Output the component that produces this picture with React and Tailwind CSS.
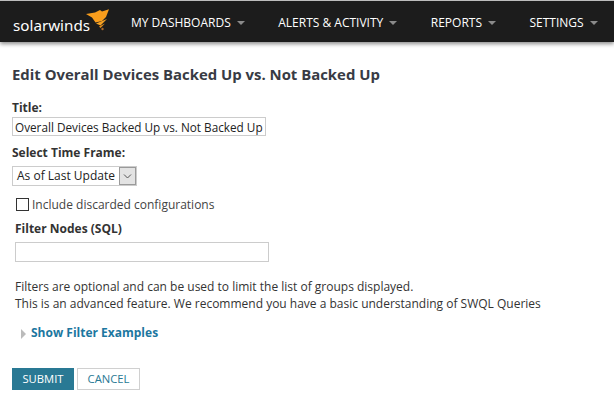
import React from 'react';

const font = "font-['Open_Sans',sans-serif]";

const Logo = () => (
  <div className="relative w-[108px] h-[32px]">
    <span className="absolute left-[13px] top-[9px] text-[15.2px] leading-[20px] text-white font-['Noto_Sans',sans-serif]">solarwinds</span>
    <svg className="absolute left-[85px] top-0" width="25" height="26" viewBox="0 0 25 26">
      <path d="M1 8 L10 6.5 L15 4 L17 5.5 L24 3.3 L21 11 L17 15 L10.5 16.5 L7 11.5 Z" fill="#f99d1c" />
      <path d="M11 17.5 L22 13 L15.5 19.5 Z" fill="#f5a122" />
      <path d="M14 20.5 L20 17.5 L15.5 22 Z" fill="#e88f1a" />
      <circle cx="17.5" cy="23" r="1.2" fill="#a9682a" />
    </svg>
  </div>
);

const NavItem = ({ label }) => (
  <div className="flex items-center gap-[6px] text-[12px] leading-[18px] text-white whitespace-nowrap">
    <span>{label}</span>
    <span className="w-0 h-0 border-x-[4px] border-x-transparent border-t-[4px] border-t-[#8a8a8a]" />
  </div>
);

export default function App() {
  return (
    <div className={`${font} w-[614px] h-[403px] overflow-hidden bg-white text-[#333]`}>
      <header className="h-[42px] border-t border-t-[#bdbdbd] bg-[#1c1c1c] flex items-center pt-[1px] shadow-[0_2px_4px_rgba(0,0,0,0.45)]">
        <Logo />
        <nav className="flex items-center ml-[23px] mt-[1px] gap-[33.5px]">
          <NavItem label="MY DASHBOARDS" />
          <NavItem label="ALERTS & ACTIVITY" />
          <NavItem label="REPORTS" />
          <NavItem label="SETTINGS" />
        </nav>
      </header>

      <main className="px-[12px]">
        <h1 className="mt-[21px] text-[14.9px] leading-[22px] font-bold text-[#383b44]">
          Edit Overall Devices Backed Up vs. Not Backed Up
        </h1>

        <label className="block mt-[15px] text-[12px] leading-[16px] font-bold">Title:</label>
        <input
          readOnly
          value="Overall Devices Backed Up vs. Not Backed Up"
          className="block mt-[1px] w-[254px] h-[19px] border border-[#ccc] pl-[2px] pr-0 text-[11.75px] text-[#222] outline-none"
        />

        <label className="block mt-[9px] text-[12px] leading-[16px] font-bold">Select Time Frame:</label>
        <div className="mt-[5px] w-[125px] h-[20px] border border-[#ccc] flex items-center justify-between pl-[4px] pr-[0px] text-[12px] text-[#222]">
          <span>As of Last Update</span>
          <span className="w-[17px] h-[18px] bg-[#e3e3e3] border border-[#9a9a9a] flex items-center justify-center">
            <svg width="9" height="5" viewBox="0 0 9 5"><path d="M1 0.5 L4.5 4 L8 0.5" fill="none" stroke="#555" /></svg>
          </span>
        </div>

        <label className="flex items-center mt-[11px] ml-[4px] text-[12px] leading-[16px] text-[#444]">
          <span className="w-[13px] h-[13px] border border-[#333] bg-white mr-[3px] mb-[2px]" />
          Include discarded configurations
        </label>

        <div className="mt-[8px] ml-[3px] text-[12px] leading-[16px] font-bold">Filter Nodes (SQL)</div>
        <div className="mt-[5px] ml-[3px] w-[254px] h-[20px] border border-[#ccc]" />

        <p className="mt-[16px] ml-[3px] text-[12px] leading-[17px] text-[#333]">
          Filters are optional and can be used to limit the list of groups displayed.
          <br />
          This is an advanced feature. We recommend you have a basic understanding of SWQL Queries
        </p>

        <div className="flex items-center mt-[13px] ml-[9px]">
          <span className="w-0 h-0 border-y-[5px] border-y-transparent border-l-[5px] border-l-[#bbb] mt-[1px]" />
          <span className="ml-[5px] text-[12px] leading-[16px] font-bold text-[#1c77a0]">Show Filter Examples</span>
        </div>

        <div className="flex mt-[27px] gap-[3px]">
          <button className="w-[62px] h-[22px] bg-[#297994] text-white text-[11.25px]">SUBMIT</button>
          <button className="w-[63px] h-[22px] bg-white border border-[#d0d0d0] text-[#297994] text-[11.25px]">CANCEL</button>
        </div>
      </main>
    </div>
  );
}
